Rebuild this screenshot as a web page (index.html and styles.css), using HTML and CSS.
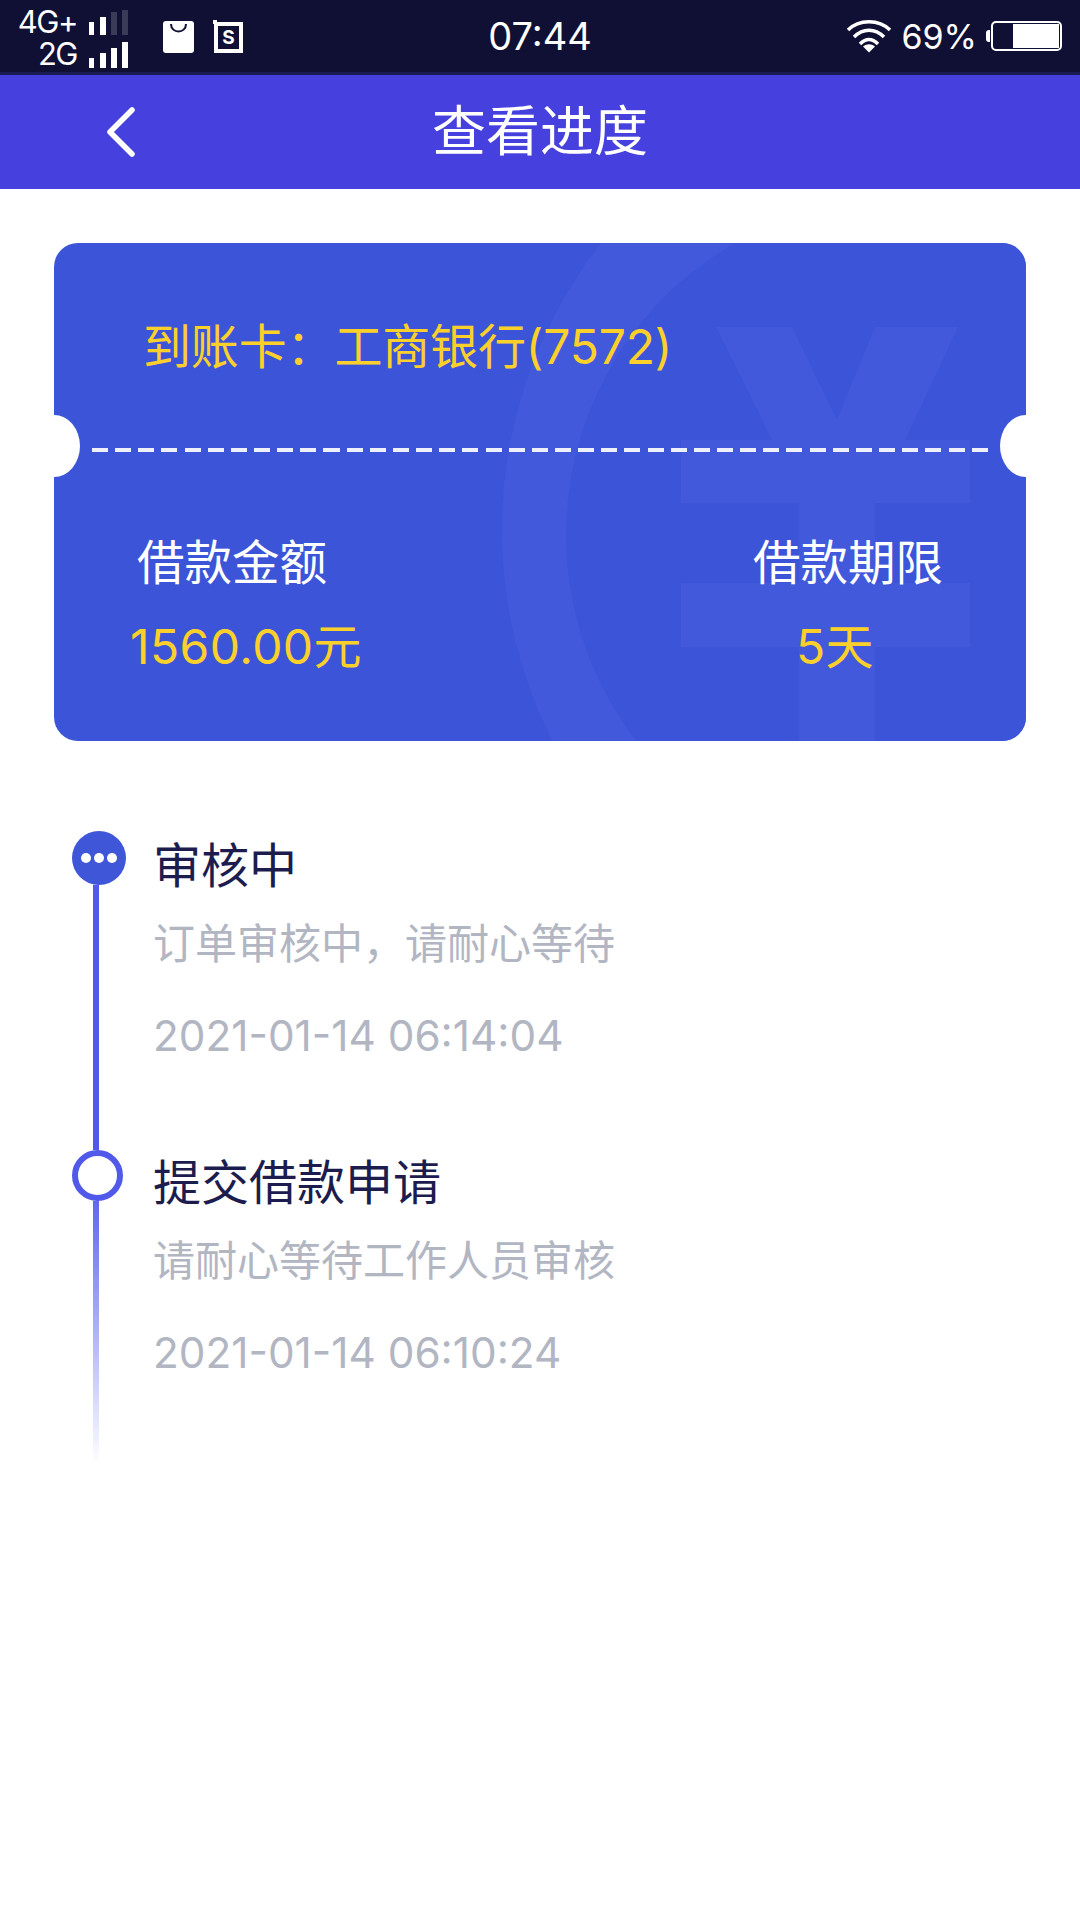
FILE: index.html
```html
<!DOCTYPE html>
<html lang="zh-CN">
<head>
    <meta charset="UTF-8">
    <meta name="viewport" content="width=device-width, initial-scale=1.0">
    <title>查看进度</title>
    <link rel="stylesheet" href="styles.css">
</head>
<body>
    <!-- status bar -->
    <div class="status-bar">
        <div class="status-left">
            <div class="network">
                <div class="network-row first">
                    <span>4G+</span>
                    <svg width="41" height="28" viewBox="0 0 41 28">
                        <rect x="1" y="12" width="5" height="13" fill="#fff"/>
                        <rect x="12" y="7" width="6" height="18" fill="#fff"/>
                        <rect x="23" y="2" width="6" height="23" fill="#3a3b57"/>
                        <rect x="34" y="-1" width="6" height="26" fill="#3a3b57"/>
                    </svg>
                </div>
                <div class="network-row">
                    <span>2G</span>
                    <svg width="41" height="28" viewBox="0 0 41 28">
                        <rect x="1" y="16" width="5" height="10" fill="#fff"/>
                        <rect x="12" y="11" width="6" height="15" fill="#fff"/>
                        <rect x="23" y="6" width="6" height="20" fill="#fff"/>
                        <rect x="34" y="0" width="6" height="26" fill="#fff"/>
                    </svg>
                </div>
            </div>
            <svg class="bag-icon" width="33" height="34" viewBox="0 0 33 34">
                <path d="M4 1H29A3 3 0 0 1 32 4V30A3 3 0 0 1 29 33H4A3 3 0 0 1 1 30V4A3 3 0 0 1 4 1Z" fill="#fff"/>
                <path d="M9 4C9 14 24 14 24 4" fill="none" stroke="#0f1033" stroke-width="2"/>
            </svg>
            <svg class="sim-icon" width="30" height="34" viewBox="0 0 30 34">
                <path d="M2 0V4M2 4H28V31H3V4" fill="none" stroke="#fff" stroke-width="4"/>
                <text x="15.500" y="24" class="sim-letter">S</text>
            </svg>
        </div>
        <div class="status-time">07:44</div>
        <div class="status-right">
            <svg width="46" height="34" viewBox="0 0 44 34">
                <path d="M1 11C12 0 32 0 43 11" fill="none" stroke="#fff" stroke-width="3.500"/>
                <path d="M7 18C16 9 28 9 37 18" fill="none" stroke="#fff" stroke-width="3.500"/>
                <path d="M13 25C19 19 25 19 31 25" fill="none" stroke="#fff" stroke-width="3.500"/>
                <path d="M16 27.500C20 24.500 24 24.500 28 27.500L22 33.500Z" fill="#fff"/>
            </svg>
            <span class="battery-text">69%</span>
            <div class="battery">
                <span class="battery-tip"></span>
                <div class="battery-body"><div class="battery-level"></div></div>
            </div>
        </div>
    </div>

    <!-- title bar -->
    <div class="nav-bar">
        <svg class="back-icon" width="32" height="52" viewBox="0 0 32 52">
            <path d="M27 4L5 26L27 48" fill="none" stroke="#fff" stroke-width="5.500" stroke-linecap="round" stroke-linejoin="round"/>
        </svg>
        <h1>查看进度</h1>
        <span></span>
    </div>

    <!-- loan card -->
    <div class="card">
        <svg class="card-mark" width="972" height="498" viewBox="54 243 972 498">
            <path fill-rule="evenodd" fill="#4259dc" d="M502 530A465 465 0 0 1 1432 530A465 465 0 0 1 502 530ZM566 535A337 337 0 0 0 1240 535A337 337 0 0 0 566 535Z"/>
            <path fill="#3c55d8" d="M780 243H1026V741H640V535Z"/>
            <path fill="#4259dc" d="M716 327H792L837 420L875 327H958L905 440H970V503H875V583H970V647H875V741H799V647H681V583H799V503H681V440H772Z"/>
        </svg>
        <span class="notch notch-left"></span>
        <span class="notch notch-right"></span>
        <div class="card-head">到账卡&#xFF1A;工商银行(7572)</div>
        <div class="card-dash"></div>
        <div class="card-stats">
            <div class="stat stat-amount">
                <div class="stat-label">借款金额</div>
                <div class="stat-value">1560.00元</div>
            </div>
            <div class="stat stat-term">
                <div class="stat-label">借款期限</div>
                <div class="stat-value">5天</div>
            </div>
        </div>
    </div>

    <!-- progress -->
    <div class="steps">
        <div class="step step-current">
            <div class="rail">
                <div class="dot-current"><i></i><i></i><i></i></div>
                <div class="rail-line"></div>
            </div>
            <div class="step-body">
                <div class="step-title">审核中</div>
                <div class="step-desc">订单审核中&#xFF0C;请耐心等待</div>
                <div class="step-time">2021-01-14 06:14:04</div>
            </div>
        </div>
        <div class="step step-done">
            <div class="rail">
                <div class="dot-done"></div>
                <div class="rail-line fade"></div>
            </div>
            <div class="step-body">
                <div class="step-title">提交借款申请</div>
                <div class="step-desc">请耐心等待工作人员审核</div>
                <div class="step-time">2021-01-14 06:10:24</div>
            </div>
        </div>
    </div>
</body>
</html>
```

FILE: styles.css
```css
/* page */
body, html {
    margin: 0;
    padding: 0;
    width: 100%;
    height: 100%;
    overflow: hidden;
    background: #fff;
    font-family: Inter, "Noto Sans CJK SC", sans-serif;
}

/* status bar */
.status-bar {
    height: 72px;
    border-bottom: 3px solid #1a1b52;
    background: #0f1033;
    color: #fff;
    display: grid;
    grid-template-columns: 1fr auto 1fr;
    align-items: center;
}

.status-left {
    display: flex;
    align-items: center;
}

.network {
    width: 129px;
    margin-top: 4px;
    display: flex;
    flex-direction: column;
    align-items: flex-end;
}

.network-row {
    display: flex;
    align-items: flex-end;
    justify-content: flex-end;
    height: 32px;
    font-size: 31px;
    line-height: 32px;
    letter-spacing: -1.5px;
}

.network-row span {
    display: block;
    height: 32px;
}

.network-row svg {
    margin-left: 11px;
}

.bag-icon {
    margin-left: 33px;
    margin-top: 2px;
}

.sim-icon {
    margin-left: 18px;
    margin-top: 2px;
}

.sim-letter {
    fill: #fff;
    font-size: 19px;
    font-weight: 700;
    text-anchor: middle;
}

.status-time {
    font-size: 38px;
    line-height: 72px;
}

.status-right {
    display: flex;
    align-items: center;
    justify-content: flex-end;
    padding-right: 18px;
}

.battery-text {
    font-size: 34px;
    margin-left: 9px;
}

.battery {
    display: flex;
    align-items: center;
    margin-left: 9px;
}

.battery-tip {
    width: 4px;
    height: 12px;
    background: #fff;
    border-radius: 3px 0 0 3px;
    margin-right: 1px;
}

.battery-body {
    box-sizing: border-box;
    width: 71px;
    height: 30px;
    border: 2px solid #fff;
    border-radius: 5px;
    padding: 1px;
    display: flex;
    justify-content: flex-end;
}

.battery-level {
    width: 46px;
    background: #fff;
}

/* title bar */
.nav-bar {
    height: 114px;
    background: #4540de;
    display: grid;
    grid-template-columns: 1fr auto 1fr;
    align-items: center;
}

.nav-bar h1 {
    margin: 0;
    color: #fff;
    font-size: 54px;
    font-weight: 400;
    line-height: 114px;
}

.back-icon {
    margin-left: 105px;
}

/* loan card */
.card {
    position: relative;
    overflow: hidden;
    margin: 54px 54px 0;
    height: 498px;
    border-radius: 24px;
    background: #3c55d8;
}

.card-mark {
    position: absolute;
    top: 0;
    left: 0;
}

.notch {
    position: absolute;
    top: 172px;
    width: 52px;
    height: 62px;
    border-radius: 50%;
    background: #fff;
}

.notch-left {
    left: -26px;
}

.notch-right {
    right: -26px;
}

.card-head {
    position: relative;
    height: 129px;
    padding: 74px 0 0 89px;
    color: #fcd02a;
    font-size: 48px;
    line-height: 60px;
    letter-spacing: -0.150px;
}

.card-dash {
    position: relative;
    height: 4px;
    margin: 2px 38px 0;
    background: repeating-linear-gradient(90deg, #eef0fc 0, #eef0fc 16px, transparent 16px, transparent 23.150px);
}

.card-stats {
    position: relative;
    display: flex;
    justify-content: space-between;
    padding: 81px 0 0;
    font-size: 48px;
    line-height: 60px;
}

.stat-label {
    color: #fff;
    font-size: 47.500px;
}

.stat-value {
    margin-top: 24px;
    color: #fcd02a;
    letter-spacing: 0.4px;
}

.stat-amount {
    margin-left: 76px;
}

.stat-amount .stat-label {
    padding-left: 7px;
}

.stat-term {
    margin-right: 83px;
}

.stat-term .stat-value {
    padding-left: 43px;
}

/* progress */
.steps {
    padding: 90px 0 0 72px;
}

.step {
    display: flex;
}

.step-current {
    height: 319px;
}

.step-done {
    height: 315px;
}

.rail {
    width: 54px;
    display: flex;
    flex-direction: column;
}

.dot-current {
    flex: none;
    width: 54px;
    height: 54px;
    border-radius: 50%;
    background: #3f56d8;
    display: flex;
    align-items: center;
    justify-content: center;
    gap: 3px;
}

.dot-current i {
    width: 10px;
    height: 10px;
    border-radius: 50%;
    background: #fff;
}

.dot-done {
    flex: none;
    box-sizing: border-box;
    width: 51px;
    height: 51px;
    border: 6px solid #5059ea;
    border-radius: 50%;
    background: #fff;
}

.rail-line {
    flex: 1;
    width: 6px;
    margin-left: 21px;
    background: #5059ea;
}

.rail-line.fade {
    background: linear-gradient(#5f68ec, rgba(95, 104, 236, 0));
}

.step-body {
    margin-left: 27px;
}

.step-title {
    color: #1c1c4e;
    font-size: 48px;
    line-height: 70px;
}

.step-done .step-title {
    line-height: 66px;
}

.step-desc {
    margin-top: 13px;
    color: #b2b6c2;
    font-size: 42px;
    line-height: 60px;
}

.step-done .step-desc {
    margin-top: 15px;
}

.step-time {
    margin-top: 32px;
    color: #b2b6c2;
    font-size: 42.300px;
    line-height: 60px;
}
```
